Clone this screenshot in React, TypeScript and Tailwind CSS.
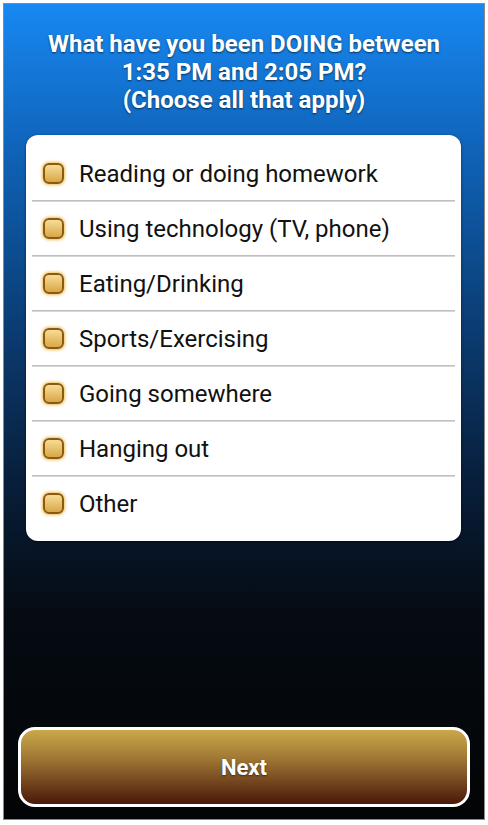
import { useState } from "react";

const options = [
  "Reading or doing homework",
  "Using technology (TV, phone)",
  "Eating/Drinking",
  "Sports/Exercising",
  "Going somewhere",
  "Hanging out",
  "Other",
];

export default function App() {
  const [checked, setChecked] = useState<string[]>([]);

  const toggle = (o: string) => {
    setChecked((prev) =>
      prev.includes(o) ? prev.filter((x) => x !== o) : [...prev, o],
    );
  };

  return (
    <div className="h-[825px] w-[488px] bg-white p-[3px] font-['Roboto',sans-serif]">
      <div className="flex h-[817px] w-[482px] flex-col border border-[#8a8a8a] bg-[linear-gradient(180deg,#1888f2_0%,#0f63b8_18%,#0b3f78_38%,#081f3c_58%,#050b12_75%,#030405_100%)]">
        <div className="pt-[26px] text-center text-[24px] font-bold leading-[28px] text-white [text-shadow:0_1px_2px_rgba(0,0,0,0.6)]">
          <p>What have you been DOING between</p>
          <p>1:35 PM and 2:05 PM?</p>
          <p>(Choose all that apply)</p>
        </div>

        <div className="ml-[22px] mr-[23px] mt-[21px] rounded-[12px] bg-white px-[6px] pb-[11px] pt-[12px] shadow-[0_1px_3px_rgba(0,0,0,0.5)]">
          {options.map((o, i) => (
            <div key={o}>
              {i > 0 && <div className="h-[2px] bg-[linear-gradient(180deg,#b4b4b4,#e2e2e2)]" />}
              <button
                onClick={() => toggle(o)}
                className="flex h-[53px] w-full items-center gap-[15px] pl-[11px] text-left"
              >
                <span className="flex h-[21px] w-[21px] shrink-0 items-center justify-center rounded-[6px] border-2 border-[#8a5a10] bg-[linear-gradient(180deg,#f7dc96,#d9a748)] shadow-[0_0_3px_1px_rgba(235,170,40,0.8)]">
                  {checked.includes(o) && (
                    <svg viewBox="0 0 16 16" className="h-[14px] w-[14px]">
                      <path d="M3 8.5l3 3 7-7" fill="none" stroke="#3a2204" strokeWidth="2.4" />
                    </svg>
                  )}
                </span>
                <span className="text-[24px] leading-none text-[#111]">{o}</span>
              </button>
            </div>
          ))}
        </div>

        <div className="flex-1" />

        <div className="px-[14px] pb-[12px]">
          <button className="flex h-[80px] w-full items-center justify-center rounded-[17px] border-[3px] border-white bg-[linear-gradient(180deg,#caa84a_0%,#a47c36_35%,#74461f_70%,#4a1808_100%)] text-[22px] font-bold text-white [text-shadow:0_1px_2px_rgba(0,0,0,0.5)]">
            Next
          </button>
        </div>
      </div>
    </div>
  );
}
